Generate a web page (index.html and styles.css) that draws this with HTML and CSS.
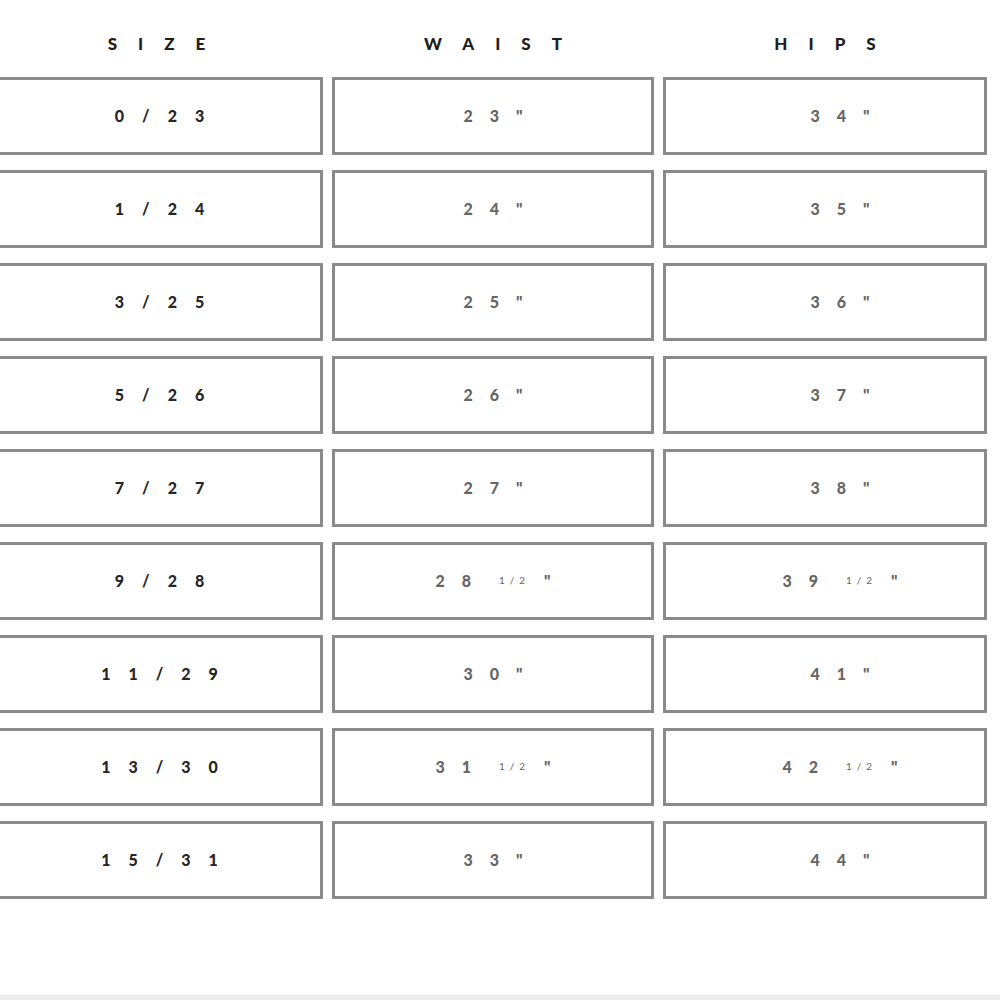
FILE: index.html
```html
<!DOCTYPE html>
<html>
<head>
<meta charset="utf-8">
<link rel="stylesheet" href="styles.css">
</head>
<body>
<div class="page">
  <div class="chart">
    <div class="head c1">SIZE</div>
    <div class="head c2">WAIST</div>
    <div class="head c3">HIPS</div>

    <div class="cell size">0/23</div><div class="cell m">23"</div><div class="cell m c3">34"</div>
    <div class="cell size">1/24</div><div class="cell m">24"</div><div class="cell m c3">35"</div>
    <div class="cell size">3/25</div><div class="cell m">25"</div><div class="cell m c3">36"</div>
    <div class="cell size">5/26</div><div class="cell m">26"</div><div class="cell m c3">37"</div>
    <div class="cell size">7/27</div><div class="cell m">27"</div><div class="cell m c3">38"</div>
    <div class="cell size">9/28</div><div class="cell m">28<span class="frac">1/2</span>"</div><div class="cell m c3">39<span class="frac">1/2</span>"</div>
    <div class="cell size">11/29</div><div class="cell m">30"</div><div class="cell m c3">41"</div>
    <div class="cell size">13/30</div><div class="cell m">31<span class="frac">1/2</span>"</div><div class="cell m c3">42<span class="frac">1/2</span>"</div>
    <div class="cell size">15/31</div><div class="cell m">33"</div><div class="cell m c3">44"</div>
  </div>
</div>
<div class="strip"></div>
</body>
</html>
```

FILE: styles.css
```css
html, body {
  margin: 0;
  padding: 0;
  background: #fff;
}
body {
  width: 1000px;
  height: 1000px;
  overflow: hidden;
  font-family: "Lato", "Liberation Sans", sans-serif;
}
.page {
  height: 995px;
  overflow: hidden;
}
.chart {
  display: grid;
  grid-template-columns: 333px 322px 324px;
  grid-template-rows: 62px;
  grid-auto-rows: 78px;
  column-gap: 9px;
  row-gap: 15px;
  margin-left: -10px;
}
.head {
  box-sizing: border-box;
  display: flex;
  align-items: center;
  justify-content: center;
  padding-top: 26px;
  font-size: 17px;
  line-height: 36px;
  font-weight: 900;
  letter-spacing: 21px;
  text-indent: 21px;
  color: #1e1e1e;
}
.cell {
  box-sizing: border-box;
  border: 3px solid #8a8a8a;
  display: flex;
  align-items: center;
  justify-content: center;
  background: #fff;
  padding-bottom: 2px;
}
.size {
  font-size: 16px;
  font-weight: 900;
  letter-spacing: 18px;
  text-indent: 18px;
  color: #262626;
  padding-left: 6px;
}
.m {
  font-size: 16px;
  font-weight: 900;
  letter-spacing: 17px;
  text-indent: 17px;
  color: #666;
}
.m.c3 {
  padding-left: 30px;
}
.frac {
  font-size: 10px;
  letter-spacing: 5px;
  font-weight: 400;
  margin-left: -6px;
  margin-right: -3px;
}
.strip {
  height: 5px;
  background: #ececec;
}
```
